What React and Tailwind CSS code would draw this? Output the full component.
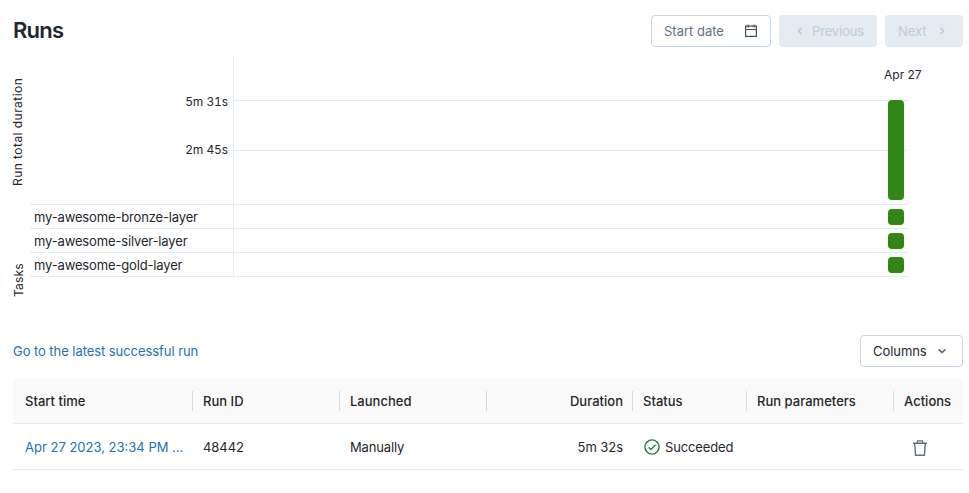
const tasks = ["my-awesome-bronze-layer", "my-awesome-silver-layer", "my-awesome-gold-layer"];

function Chevron({ d, className }) {
  return (
    <svg className={className} width="16" height="16" viewBox="0 0 16 16" fill="none" stroke="currentColor" strokeWidth="1.7">
      <path d={d} />
    </svg>
  );
}

function CalendarIcon() {
  return (
    <svg width="14" height="14" viewBox="0 0 14 14" fill="none" stroke="#444f57" strokeWidth="1.2">
      <path d="M1.6 2.1h10.8v10.3H1.6zM1.6 5.5h10.8M4 .6v3M10 .6v3" />
    </svg>
  );
}

function CheckCircle() {
  return (
    <svg width="16" height="16" viewBox="0 0 16 16" fill="none" stroke="#277c43" strokeWidth="1.4">
      <circle cx="8" cy="8" r="7.1" />
      <path d="M4.6 8.2 7 10.5l4.6-4.7" />
    </svg>
  );
}

function TrashIcon() {
  return (
    <svg width="16" height="16" viewBox="0 0 16 16" fill="none" stroke="#5f7281" strokeWidth="1.4">
      <path d="M1 3.3h14M5.1 3.3 5.7 .9h4.6l.6 2.4M2.7 3.5l.9 11.8h8.8l.9-11.8" />
    </svg>
  );
}

function Divider() {
  return <span className="h-5 w-px shrink-0 bg-[#d9d9d9]" />;
}

export default function App() {
  return (
    <main className="h-[493px] w-[969px] overflow-hidden bg-white pl-[13px] pr-[6px] pt-[15px] font-['Inter',sans-serif] text-[13px] leading-5 tracking-[-0.06px] text-[#1f272d]">
      <header className="flex h-8 items-center justify-between">
        <h1 className="pb-[2px] text-[22px] font-semibold leading-7 tracking-[-0.75px]">Runs</h1>
        <div className="flex gap-2">
          <button className="flex h-8 w-[120px] items-center justify-between rounded border border-[#c8d7e5] pl-3 pr-3 tracking-normal text-[#5f7281]">
            Start date
            <CalendarIcon />
          </button>
          <button className="flex h-8 w-[98px] items-center gap-1 rounded bg-[#e4ebf1] pl-[13px] tracking-[-0.15px] text-[#bdcddb]">
            <Chevron d="M9.6 4.8 6.4 8l3.2 3.2" />
            Previous
          </button>
          <button className="flex h-8 w-[78px] items-center justify-between rounded bg-[#e4ebf1] pl-[13px] pr-[13px] text-[#bdcddb]">
            Next
            <Chevron d="M6.4 4.8 9.6 8l-3.2 3.2" />
          </button>
        </div>
      </header>

      <section className="mt-2 flex h-[280px]">
        <div className="-ml-px flex w-[18px] flex-col items-start pt-[23px] text-[12px] leading-3">
          <span className="h-[108px] rotate-180 whitespace-nowrap tracking-[0.45px] [writing-mode:vertical-rl]">Run total duration</span>
          <span className="ml-px mt-[77px] h-[34px] rotate-180 whitespace-nowrap tracking-[0.2px] [writing-mode:vertical-rl]">Tasks</span>
        </div>
        <div className="w-[203px]">
          <div className="h-[149px] pr-[5px] pt-[37px] text-right text-[12px] tabular-nums tracking-[-0.1px]">
            <div>5m 31s</div>
            <div className="mt-7">2m 45s</div>
          </div>
          <div className="border-b border-[#e4ebf1]">
            {tasks.map((task) => (
              <div key={task} className="h-6 border-t border-[#e4ebf1] pl-1 pt-[2px] leading-5 tracking-[-0.15px]">{task}</div>
            ))}
          </div>
        </div>
        <div className="relative h-[222px] w-[675px] border-l border-[#e4ebf1]">
          <div className="h-[45px]" />
          <div className="h-[50px] border-t border-[#e4ebf1]" />
          <div className="h-[54px] border-t border-[#e4ebf1]" />
          <div className="border-b border-[#e4ebf1]">
            {tasks.map((task) => (
              <div key={task} className="flex h-6 justify-end border-t border-[#e4ebf1] pr-1 pt-1">
                <span className="h-4 w-4 rounded bg-[#318714]" />
              </div>
            ))}
          </div>
          <span className="absolute left-[650px] top-[10px] whitespace-nowrap text-[12px] tracking-normal">Apr 27</span>
          <span className="absolute right-1 top-[45px] h-[100px] w-4 rounded bg-[#318714]" />
        </div>
      </section>

      <div className="flex h-8 items-center justify-between">
        <a className="text-[#2272b4]">Go to the latest successful run</a>
        <button className="flex h-8 w-[103px] items-center justify-between rounded border border-[#c8d7e5] pl-3 pr-3">
          Columns
          <Chevron className="text-[#5f7281]" d="M4.6 6.4 8 9.6l3.4-3.2" />
        </button>
      </div>

      <div className="mt-3">
        <div className="flex h-[45px] items-center border-b border-[#e8e8e8] bg-[#fafafa] font-medium tracking-[0.02px] text-[#262626]">
          <span className="w-[179px] pl-3">Start time</span>
          <Divider />
          <span className="w-[146px] pl-[10px]">Run ID</span>
          <Divider />
          <span className="w-[146px] pl-[10px]">Launched</span>
          <Divider />
          <span className="w-[145px] pr-[9px] text-right">Duration</span>
          <Divider />
          <span className="w-[113px] pl-[10px]">Status</span>
          <Divider />
          <span className="w-[146px] pl-[10px]">Run parameters</span>
          <Divider />
          <span className="pl-[10px]">Actions</span>
        </div>
        <div className="flex h-[46px] items-center border-b border-[#e8e8e8]">
          <a className="w-[180px] whitespace-nowrap pl-3 tracking-normal text-[#2272b4]">Apr 27 2023, 23:34 PM ...</a>
          <span className="w-[147px] pl-[10px]">48442</span>
          <span className="w-[147px] pl-[10px] tracking-[-0.15px]">Manually</span>
          <span className="w-[146px] pr-[10px] text-right">5m 32s</span>
          <span className="flex w-[114px] items-center gap-[5px] pl-[11px] tracking-[-0.15px]">
            <CheckCircle />
            Succeeded
          </span>
          <span className="w-[147px]" />
          <span className="pl-[18px] pt-[2px]">
            <TrashIcon />
          </span>
        </div>
      </div>
    </main>
  );
}
